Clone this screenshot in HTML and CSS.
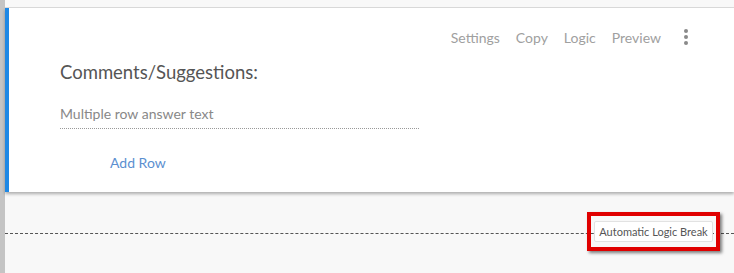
FILE: index.html
```html
<!DOCTYPE html>
<html lang="en">
<head>
  <meta charset="UTF-8">
  <title>Question editor</title>
  <link rel="stylesheet" href="styles.css">
</head>
<body>
  <div class="rail"></div>
  <div class="page">
    <div class="top-gap"></div>

    <!-- question card -->
    <div class="card">
      <div class="toolbar">
        <span class="tool">Settings</span>
        <span class="tool">Copy</span>
        <span class="tool">Logic</span>
        <span class="tool">Preview</span>
        <span class="kebab"><i></i><i></i><i></i></span>
      </div>
      <h2 class="question">Comments/Suggestions:</h2>
      <div class="answer-row">Multiple row answer text</div>
      <a class="add-row">Add Row</a>
    </div>

    <!-- logic break -->
    <div class="break">
      <div class="break-line"></div>
      <div class="highlight">
        <span class="break-label">Automatic Logic Break</span>
      </div>
    </div>
  </div>
</body>
</html>
```

FILE: styles.css
```css
body {
  margin: 0;
  display: flex;
  height: 273px;
  overflow: hidden;
  background: #f8f8f8;
  font-family: Lato, 'Open Sans', sans-serif;
}
.rail {
  width: 5px;
  flex-shrink: 0;
  background: #c4c4c4;
}
.page {
  flex: 1;
  display: flex;
  flex-direction: column;
}
.top-gap {
  height: 7px;
  border-bottom: 1px solid #dcdcdc;
}

/* card */
.card {
  height: 184px;
  box-sizing: border-box;
  background: #fff;
  border-left: 4px solid #1e88e5;
  box-shadow: 0 2px 3px rgba(0, 0, 0, 0.3);
  padding: 0 0 0 51px;
}
.toolbar {
  display: flex;
  justify-content: flex-end;
  align-items: center;
  gap: 16px;
  height: 22px;
  margin-top: 18px;
  padding-right: 46px;
}
.tool {
  font-size: 14px;
  color: #a0a0a0;
}
.kebab {
  display: flex;
  flex-direction: column;
  gap: 2px;
  margin-left: 7px;
}
.kebab i {
  width: 4px;
  height: 4px;
  border-radius: 50%;
  background: #8a8a8a;
}
.question {
  margin: 13px 0 0;
  font-size: 18.5px;
  font-weight: normal;
  color: #555;
}
.answer-row {
  width: 359px;
  margin-top: 22px;
  padding-bottom: 6px;
  border-bottom: 1px dotted #999;
  font-size: 14px;
  color: #888;
}
.add-row {
  display: inline-block;
  margin: 25px 0 0 50px;
  font-size: 14px;
  color: #5b8fd0;
}

/* logic break */
.break {
  position: relative;
  flex: 1;
}
.break-line {
  margin-top: 41px;
  border-top: 1px dashed #555;
}
.highlight {
  position: absolute;
  top: 20px;
  left: 582px;
  width: 125px;
  height: 31px;
  border: 4px solid #e00000;
  box-shadow: 2px 2px 3px rgba(0, 0, 0, 0.5);
  display: flex;
  align-items: center;
  justify-content: center;
}
.break-label {
  background: #fff;
  border: 1px solid #e2e2e2;
  border-radius: 2px;
  padding: 3px 4px;
  font-size: 11px;
  color: #555;
}
```
